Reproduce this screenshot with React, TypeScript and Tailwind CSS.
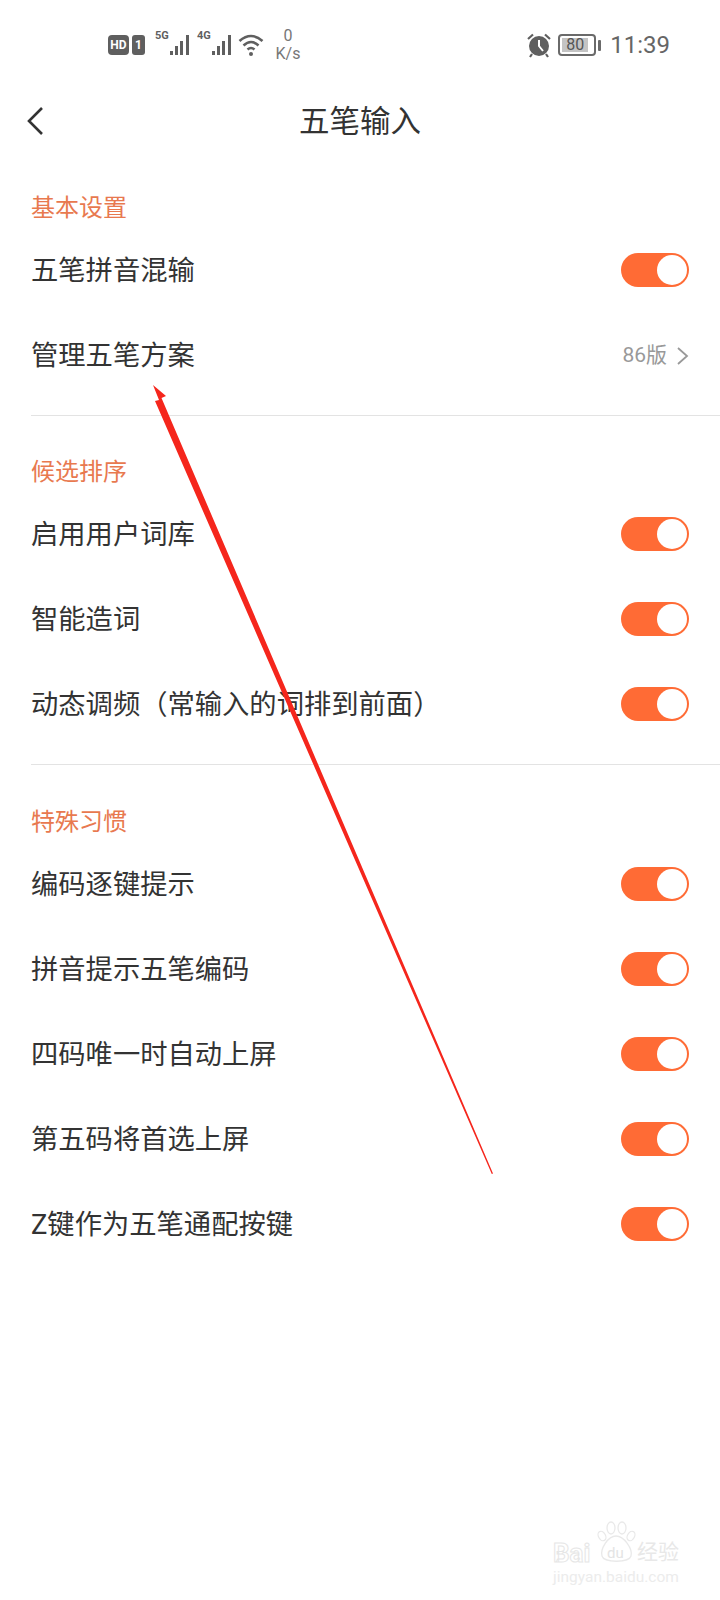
const FONT = "font-['Roboto','Noto_Sans_CJK_SC',sans-serif]";

function Toggle() {
  return (
    <div className="flex h-[34px] w-[68px] items-center justify-end rounded-full bg-[#ff6b35] pr-[2px]">
      <div className="h-[30px] w-[30px] rounded-full bg-white" />
    </div>
  );
}

function Row({ label, right }: { label: string; right?: React.ReactNode }) {
  return (
    <div className="flex h-[85px] items-center justify-between pr-[31px]">
      <span className="pt-[4px] text-[27.3px] leading-none text-[#333333]">{label}</span>
      {right ?? <Toggle />}
    </div>
  );
}

function Section({ title, children, last }: { title: string; children: React.ReactNode; last?: boolean }) {
  return (
    <section className={last ? "pl-[31px] pt-[34px]" : "ml-[31px] border-b border-[#e3e3e3] pb-[18px] pt-[33px]"}>
      <h2 className="flex h-[42px] items-center pt-[3px] text-[24px] font-normal leading-none text-[#e8794f]">{title}</h2>
      {children}
    </section>
  );
}

function Signal({ tag }: { tag: string }) {
  return (
    <div className="relative h-[26px] w-[37px]">
      <span className="absolute left-0 top-[-2px] text-[11px] font-bold leading-none text-[#5f5f5f]">{tag}</span>
      <svg className="absolute left-[11px] top-[1px]" width="28" height="24" viewBox="0 0 28 24" fill="#5f5f5f">
        <rect x="4" y="18" width="3" height="4" />
        <rect x="9" y="13" width="3" height="9" />
        <rect x="14" y="8" width="3" height="14" />
        <rect x="20" y="2" width="3" height="20" />
      </svg>
    </div>
  );
}

function StatusBar() {
  return (
    <div className="flex h-[90px] items-center pl-[108px] pr-[50px] text-[#5f5f5f]">
      <div className="flex h-[20px] w-[21px] items-center justify-center rounded-[4px] bg-[#5f5f5f] text-[12px] font-bold leading-none text-white">
        HD
      </div>
      <div className="ml-[3px] flex h-[20px] w-[13px] items-center justify-center rounded-[3px] bg-[#5f5f5f] text-[12px] font-bold leading-none text-white">
        1
      </div>
      <div className="ml-[10px] flex gap-[5px]">
        <Signal tag="5G" />
        <Signal tag="4G" />
      </div>
      <svg className="ml-[4px]" width="27" height="24" viewBox="0 0 27 24" fill="none" stroke="#5f5f5f" strokeWidth="2.6">
        <path d="M1.5 8 Q13 -2 24.5 8" />
        <path d="M5.5 12.5 Q13 5.5 20.5 12.5" />
        <path d="M9.5 16.5 Q13 13.5 16.5 16.5" />
        <circle cx="13" cy="21" r="2" fill="#5f5f5f" stroke="none" />
      </svg>
      <div className="ml-[10px] flex w-[26px] flex-col items-center text-[16px] leading-[18px] text-[#777777]">
        <span>0</span>
        <span>K/s</span>
      </div>
      <div className="flex-1" />
      <svg width="26" height="26" viewBox="0 0 26 26" fill="#5f5f5f">
        <circle cx="13" cy="14" r="10" />
        <path d="M13 8 V14 L17 19" fill="none" stroke="#ffffff" strokeWidth="2" />
        <path d="M2 7 L7 2.5 M24 7 L19 2.5 M6 22 L4 25 M20 22 L22 25" fill="none" stroke="#5f5f5f" strokeWidth="2.2" />
      </svg>
      <div className="ml-[6px] flex h-[22px] w-[38px] items-center rounded-[4px] border-2 border-[#6a6a6a] p-[2px]">
        <div className="flex h-full w-[26px] items-center justify-center bg-[#c4c4c4] text-[16px] leading-none text-[#555555]">
          80
        </div>
      </div>
      <div className="ml-[2px] h-[11px] w-[3px] rounded-[1px] bg-[#6a6a6a]" />
      <span className="ml-[9px] text-[24px] leading-none text-[#666666]">11:39</span>
    </div>
  );
}

function NavBar() {
  return (
    <div className="relative flex h-[62px] items-center justify-center">
      <svg className="absolute left-[26px] top-[16px]" width="18" height="30" viewBox="0 0 18 30" fill="none" stroke="#333333" strokeWidth="2.6">
        <path d="M16 2 L3 15 L16 28" />
      </svg>
      <h1 className="pt-[2px] text-[30.5px] font-normal leading-none text-[#333333]">五笔输入</h1>
    </div>
  );
}

function Arrow() {
  return (
    <svg className="pointer-events-none absolute left-0 top-0" width="720" height="1600" viewBox="0 0 720 1600">
      <path d="M153 385 L166 396 L161.5 398 L493 1173.5 L491.8 1174 L155 401 L159 400 Z" fill="#f5261c" />
    </svg>
  );
}

function Watermark() {
  return (
    <div className="absolute left-[553px] top-[1520px] h-[68px] w-[130px] text-white">
      <svg className="absolute left-[43px] top-[1px]" width="40" height="43" viewBox="0 0 40 43" fill="none" stroke="#e9e9e9" strokeWidth="1.3">
        <ellipse cx="6" cy="15" rx="3.5" ry="5" transform="rotate(-30 6 15)" />
        <ellipse cx="15" cy="7" rx="4" ry="6" />
        <ellipse cx="26" cy="7" rx="4" ry="6" />
        <ellipse cx="35" cy="15" rx="3.5" ry="5" transform="rotate(30 35 15)" />
        <path d="M20 15 C28 15 37 28 35 35 C33 42 8 42 6 35 C4 28 12 15 20 15 Z" />
      </svg>
      <span className="absolute left-0 top-[20px] text-[26px] font-bold leading-none [-webkit-text-stroke:1px_#e6e6e6]">Bai</span>
      <span className="absolute left-[54px] top-[26px] text-[15px] leading-none text-[#e4e4e4]">du</span>
      <span className="absolute left-[84px] top-[22px] text-[21px] leading-none text-[#e8e8e8]">经验</span>
      <span className="absolute left-0 top-[50px] text-[15.5px] leading-none text-[#ececec]">jingyan.baidu.com</span>
    </div>
  );
}

export default function App() {
  return (
    <div className={`relative h-[1600px] w-[720px] overflow-hidden bg-white ${FONT}`}>
      <StatusBar />
      <NavBar />
      <Section title="基本设置">
        <Row label="五笔拼音混输" />
        <Row
          label="管理五笔方案"
          right={
            <div className="flex items-center gap-[9px] pt-[2px]">
              <span className="text-[21px] leading-none text-[#999999]">86版</span>
              <svg width="13" height="20" viewBox="0 0 13 20" fill="none" stroke="#999999" strokeWidth="1.8">
                <path d="M2 2 L11 10 L2 18" />
              </svg>
            </div>
          }
        />
      </Section>
      <Section title="候选排序">
        <Row label="启用用户词库" />
        <Row label="智能造词" />
        <Row label="动态调频（常输入的词排到前面）" />
      </Section>
      <Section title="特殊习惯" last>
        <Row label="编码逐键提示" />
        <Row label="拼音提示五笔编码" />
        <Row label="四码唯一时自动上屏" />
        <Row label="第五码将首选上屏" />
        <Row label="Z键作为五笔通配按键" />
      </Section>
      <Arrow />
      <Watermark />
    </div>
  );
}
